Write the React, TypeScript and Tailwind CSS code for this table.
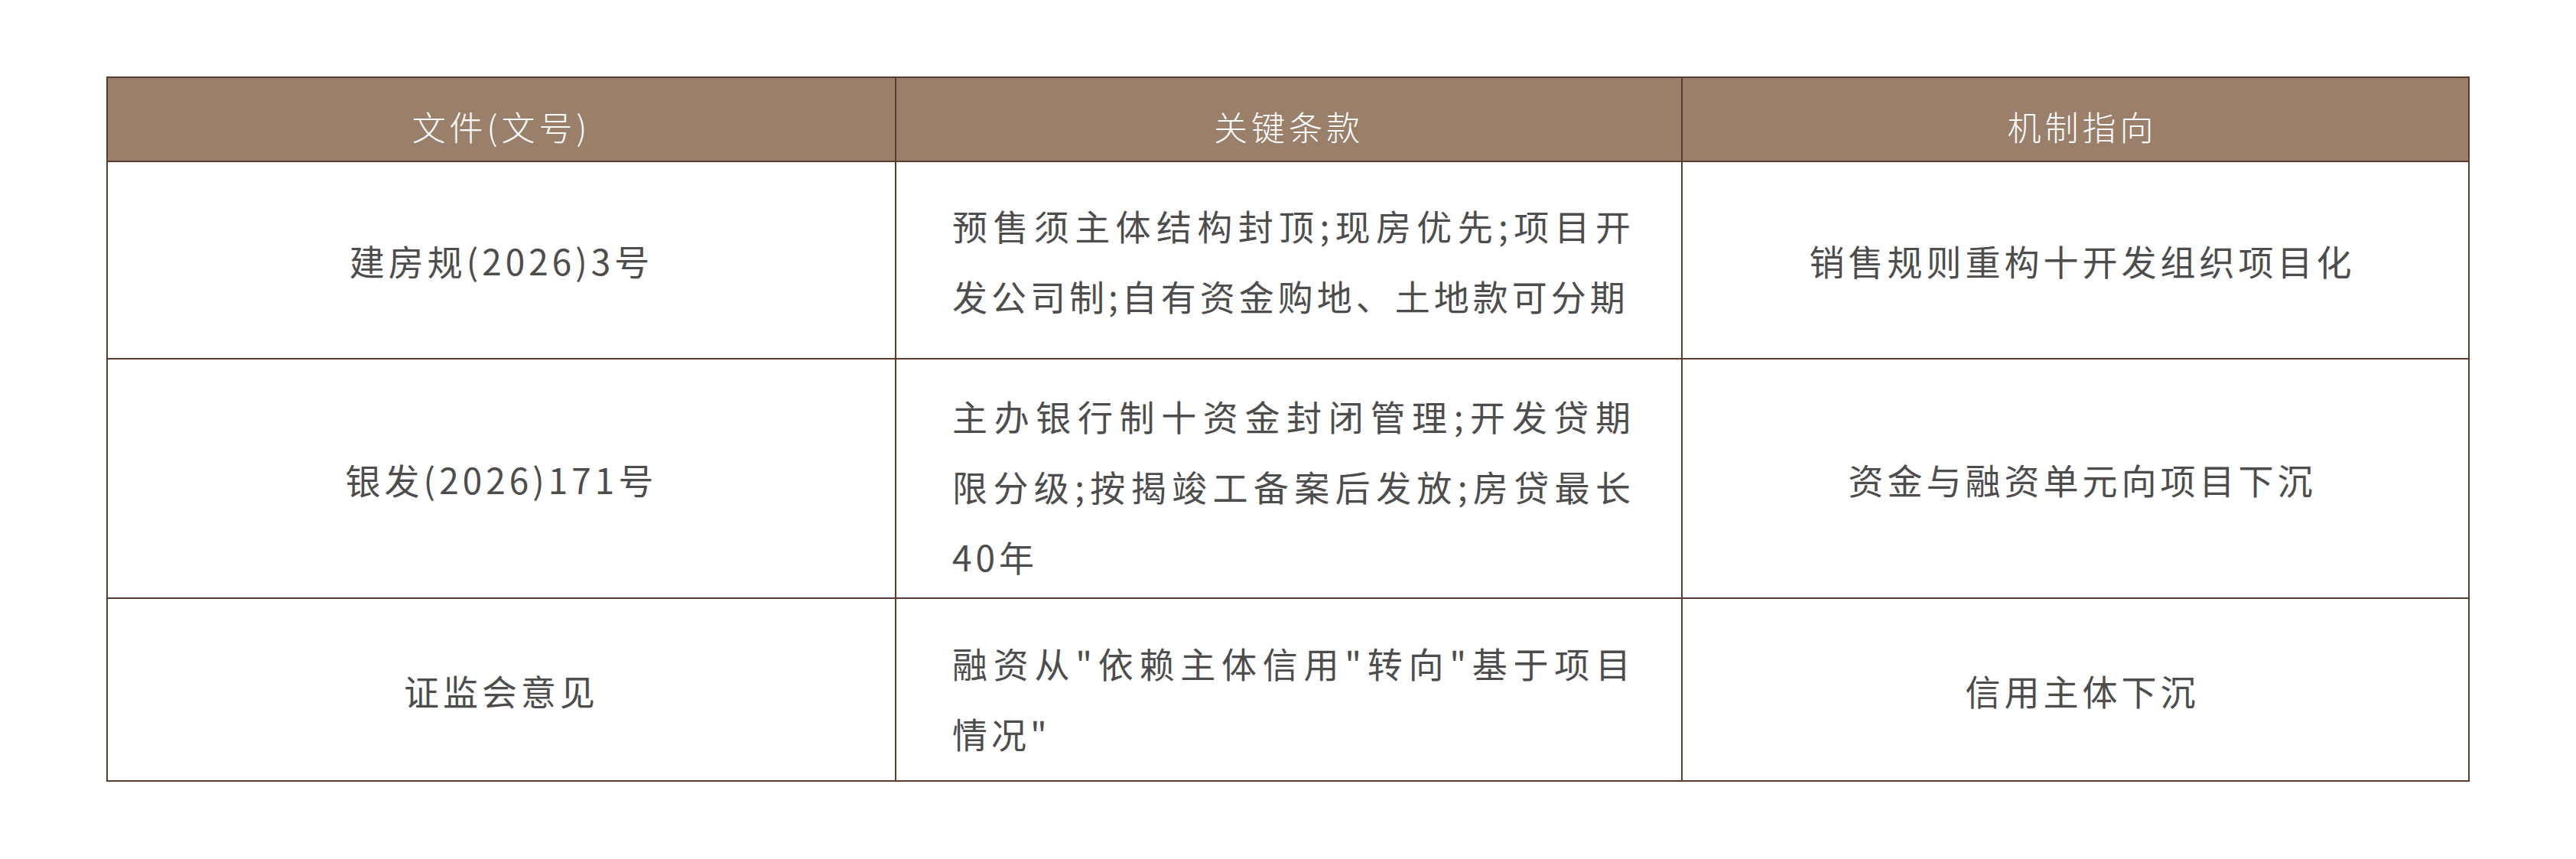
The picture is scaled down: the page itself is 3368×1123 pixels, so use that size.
const cell = "font-['Noto_Sans_CJK_SC',sans-serif]";

interface Row {
  doc: string;
  terms: string[];
  aim: string;
  height: string;
  shift: string;
}

const rows: Row[] = [
  {
    doc: "建房规(2026)3号",
    terms: ["预售须主体结构封顶;现房优先;项目开", "发公司制;自有资金购地、土地款可分期"],
    aim: "销售规则重构十开发组织项目化",
    height: "h-[258px] border-b-2",
    shift: "",
  },
  {
    doc: "银发(2026)171号",
    terms: ["主办银行制十资金封闭管理;开发贷期", "限分级;按揭竣工备案后发放;房贷最长", "40年"],
    aim: "资金与融资单元向项目下沉",
    height: "h-[313px] border-b-2",
    shift: "pt-[18px]",
  },
  {
    doc: "证监会意见",
    terms: ['融资从"依赖主体信用"转向"基于项目', '情况"'],
    aim: "信用主体下沉",
    height: "h-[237px]",
    shift: "pt-[20px]",
  },
];

export default function App() {
  return (
    <div className={`min-h-screen bg-white pt-[100px] pl-[139px] ${cell}`}>
      <div className="w-[3090px] border-2 border-[#5a3b30]">
        <div className="grid h-[110px] grid-cols-[1031px_1028px_1fr] border-b-2 border-[#5a3b30] bg-[#9a7f6a] text-[44px] font-light tracking-[5px] text-white">
          <div className="flex items-center justify-center border-r-2 border-[#5a3b30] pt-[18px]">文件(文号)</div>
          <div className="flex items-center justify-center border-r-2 border-[#5a3b30] pt-[18px]">关键条款</div>
          <div className="flex items-center justify-center pt-[18px] pl-[18px]">机制指向</div>
        </div>
        {rows.map((r) => (
          <div
            key={r.doc}
            className={`grid grid-cols-[1031px_1028px_1fr] border-[#5a3b30] text-[46px] leading-[92px] tracking-[5px] text-[#4d4d4d] ${r.height}`}
          >
            <div className="flex items-center justify-center border-r-2 border-[#5a3b30]">{r.doc}</div>
            <div className={`flex flex-col justify-center border-r-2 border-[#5a3b30] pl-[73px] pr-[61px] ${r.shift}`}>
              {r.terms.map((t, i) => (
                <div
                  key={i}
                  className={i < r.terms.length - 1 ? "whitespace-nowrap text-justify [text-align-last:justify]" : "whitespace-nowrap"}
                >
                  {t}
                </div>
              ))}
            </div>
            <div className="flex items-center justify-center pl-[18px]">{r.aim}</div>
          </div>
        ))}
      </div>
    </div>
  );
}
